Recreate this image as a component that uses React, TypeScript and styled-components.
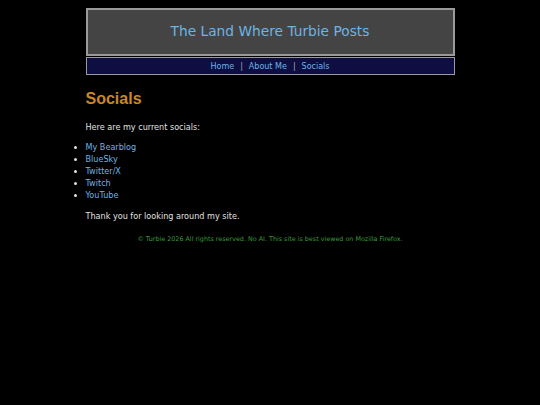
import styled, { createGlobalStyle } from 'styled-components';

const GlobalStyle = createGlobalStyle`
  html, body {
    margin: 0;
    padding: 0;
    background: #000;
  }
  body {
    font-family: "DejaVu Sans", Verdana, sans-serif;
    color: #ddd;
  }
`;

const Page = styled.div`
  width: 369px;
  margin: 0 auto;
  padding-top: 8px;
`;

const Header = styled.header`
  height: 44px;
  box-sizing: content-box;
  background: #444;
  border: 2px solid #9a9a9a;
  display: flex;
  align-items: center;
  justify-content: center;
  padding-bottom: 0;
`;

const SiteTitle = styled.h1`
  margin: 0 0 3px;
  font-size: 13.75px;
  font-weight: normal;
  color: #6cb4e4;
`;

const Nav = styled.nav`
  margin-top: 1px;
  height: 16px;
  background: #0e0e42;
  border: 1px solid #9a9a9a;
  display: flex;
  align-items: center;
  justify-content: center;
  gap: 6px;
  font-size: 8px;
  color: #aaa;
`;

const NavLink = styled.a`
  color: #6cb4e4;
  text-decoration: none;
`;

const Content = styled.main`
  padding-top: 15px;
  font-size: 8.1px;
  color: #e0e0e0;
`;

const Heading = styled.h2`
  margin: 0 0 13px;
  font-family: "Liberation Sans", Arial, sans-serif;
  font-size: 16px;
  font-weight: bold;
  color: #c8862a;
`;

const Para = styled.p`
  margin: 0 0 8px;
  line-height: 12px;
`;

const List = styled.ul`
  margin: 0 0 9px;
  padding-left: 0;
  line-height: 12px;
  list-style-position: outside;
`;

const Item = styled.li`
  margin-left: 0;
`;

const ItemLink = styled.a`
  color: #6cb4e4;
  text-decoration: none;
`;

const Footer = styled.footer`
  margin-top: 13px;
  text-align: center;
  font-size: 6.4px;
  color: #3a9a3a;
`;

const socials = ['My Bearblog', 'BlueSky', 'Twitter/X', 'Twitch', 'YouTube'];

export default function App() {
  return (
    <>
      <GlobalStyle />
      <Page>
        <Header>
          <SiteTitle>The Land Where Turbie Posts</SiteTitle>
        </Header>
        <Nav>
          <NavLink href="#">Home</NavLink>
          <span>|</span>
          <NavLink href="#">About Me</NavLink>
          <span>|</span>
          <NavLink href="#">Socials</NavLink>
        </Nav>
        <Content>
          <Heading>Socials</Heading>
          <Para>Here are my current socials:</Para>
          <List>
            {socials.map((s) => (
              <Item key={s}>
                <ItemLink href="#">{s}</ItemLink>
              </Item>
            ))}
          </List>
          <Para>Thank you for looking around my site.</Para>
        </Content>
        <Footer>© Turbie 2026 All rights reserved. No AI. This site is best viewed on Mozilla Firefox.</Footer>
      </Page>
    </>
  );
}
